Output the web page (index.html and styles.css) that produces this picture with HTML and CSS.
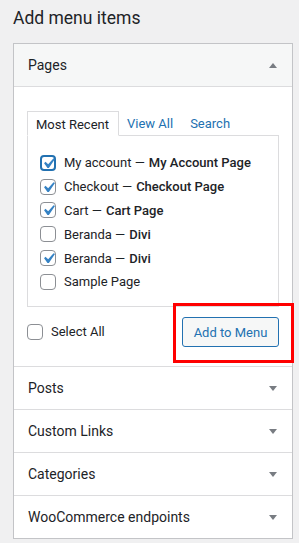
FILE: index.html
```html
<!DOCTYPE html>
<html lang="en">
<head>
  <meta charset="UTF-8" />
  <title>Add menu items</title>
  <link rel="stylesheet" href="styles.css">
</head>
<body>
  <h2 class="title">Add menu items</h2>

  <div class="accordion">
    <div class="section open">
      <div class="section-head">
        <span>Pages</span>
        <span class="arrow up"></span>
      </div>
      <div class="section-body">
        <ul class="tabs">
          <li class="tab active">Most Recent</li>
          <li class="tab">View All</li>
          <li class="tab">Search</li>
        </ul>
        <div class="tab-panel">
          <label class="item"><span class="check focus"><svg viewBox="0 0 20 20"><path d="M14.83 4.89l1.34.94-5.81 8.38H9.02L5.78 9.67l1.34-1.25 2.57 2.4z"/></svg></span>My account — <b>My Account Page</b></label>
          <label class="item"><span class="check"><svg viewBox="0 0 20 20"><path d="M14.83 4.89l1.34.94-5.81 8.38H9.02L5.78 9.67l1.34-1.25 2.57 2.4z"/></svg></span>Checkout — <b>Checkout Page</b></label>
          <label class="item"><span class="check"><svg viewBox="0 0 20 20"><path d="M14.83 4.89l1.34.94-5.81 8.38H9.02L5.78 9.67l1.34-1.25 2.57 2.4z"/></svg></span>Cart — <b>Cart Page</b></label>
          <label class="item"><span class="check"></span>Beranda — <b>Divi</b></label>
          <label class="item"><span class="check"><svg viewBox="0 0 20 20"><path d="M14.83 4.89l1.34.94-5.81 8.38H9.02L5.78 9.67l1.34-1.25 2.57 2.4z"/></svg></span>Beranda — <b>Divi</b></label>
          <label class="item"><span class="check"></span>Sample Page</label>
        </div>
        <div class="actions">
          <label class="item select-all"><span class="check"></span>Select All</label>
          <div class="btn-wrap">
            <button class="btn">Add to Menu</button>
            <div class="highlight"></div>
          </div>
        </div>
      </div>
    </div>
    <div class="section">
      <div class="section-head"><span>Posts</span><span class="arrow"></span></div>
    </div>
    <div class="section">
      <div class="section-head"><span>Custom Links</span><span class="arrow"></span></div>
    </div>
    <div class="section">
      <div class="section-head"><span>Categories</span><span class="arrow"></span></div>
    </div>
    <div class="section">
      <div class="section-head"><span>WooCommerce endpoints</span><span class="arrow"></span></div>
    </div>
  </div>
</body>
</html>
```

FILE: styles.css
```css
body {
  margin: 0;
  padding: 0 6px 0 13px;
  background-color: #f0f0f1;
  color: #1d2327;
  font-family: Roboto, sans-serif;
  font-size: 13px;
}

.title {
  margin: 0;
  padding-top: 7px;
  height: 36px;
  font-size: 17.5px;
  font-weight: 400;
  line-height: 22px;
}

.accordion {
  border: 1px solid #c3c4c7;
  background-color: #fff;
}

.section {
  border-top: 1px solid #dcdcde;
}

.section:first-child {
  border-top: none;
}

.section-head {
  height: 42px;
  display: flex;
  align-items: center;
  justify-content: space-between;
  padding: 0 15px 0 14px;
  font-size: 14px;
}

.section.open .section-head {
  background-color: #f6f7f7;
  border-bottom: 1px solid #dcdcde;
}

.arrow {
  width: 0;
  height: 0;
  border-left: 4px solid transparent;
  border-right: 4px solid transparent;
  border-top: 5px solid #787c82;
}

.arrow.up {
  border-top: none;
  border-bottom: 5px solid #787c82;
}

.section-body {
  padding: 24px 13px 19px;
}

.tabs {
  list-style: none;
  margin: 0;
  padding: 0;
  display: flex;
  height: 25px;
}

.tab {
  padding: 0 9px 0 8px;
  line-height: 25px;
  color: #2271b1;
}

.tab.active {
  color: #1d2327;
  border: 1px solid #dcdcde;
  border-bottom: 1px solid #fff;
  background-color: #fff;
  position: relative;
  z-index: 1;
}

.tab-panel {
  box-sizing: border-box;
  border: 1px solid #dcdcde;
  margin-top: -1px;
  padding: 15px 12px 9px;
  height: 172px;
  display: flex;
  flex-direction: column;
}

.item {
  display: flex;
  align-items: center;
  height: 23.8px;
  flex-shrink: 0;
}

.item b {
  font-weight: 500;
  margin-left: 4px;
}

.check {
  box-sizing: border-box;
  position: relative;
  width: 16px;
  height: 16px;
  border: 1px solid #8c8f94;
  border-radius: 4px;
  margin-right: 8px;
  flex-shrink: 0;
}

.check svg {
  position: absolute;
  left: -3px;
  top: -3px;
  width: 21px;
  height: 21px;
  fill: #3582c4;
}

.check.focus {
  border: 2px solid #2271b1;
}

.check.focus svg {
  left: -4px;
  top: -4px;
}

.actions {
  display: flex;
  justify-content: space-between;
  align-items: center;
  margin-top: 10px;
}

.btn-wrap {
  position: relative;
}

.btn {
  display: block;
  width: 97px;
  height: 30px;
  padding: 0;
  border: 1px solid #2271b1;
  border-radius: 3px;
  background-color: #f6f7f7;
  color: #2271b1;
  font-family: Roboto, sans-serif;
  font-size: 13px;
}

.highlight {
  position: absolute;
  left: -9px;
  top: -14px;
  width: 121px;
  height: 60px;
  box-sizing: border-box;
  border: 3px solid #ff0000;
}
```
